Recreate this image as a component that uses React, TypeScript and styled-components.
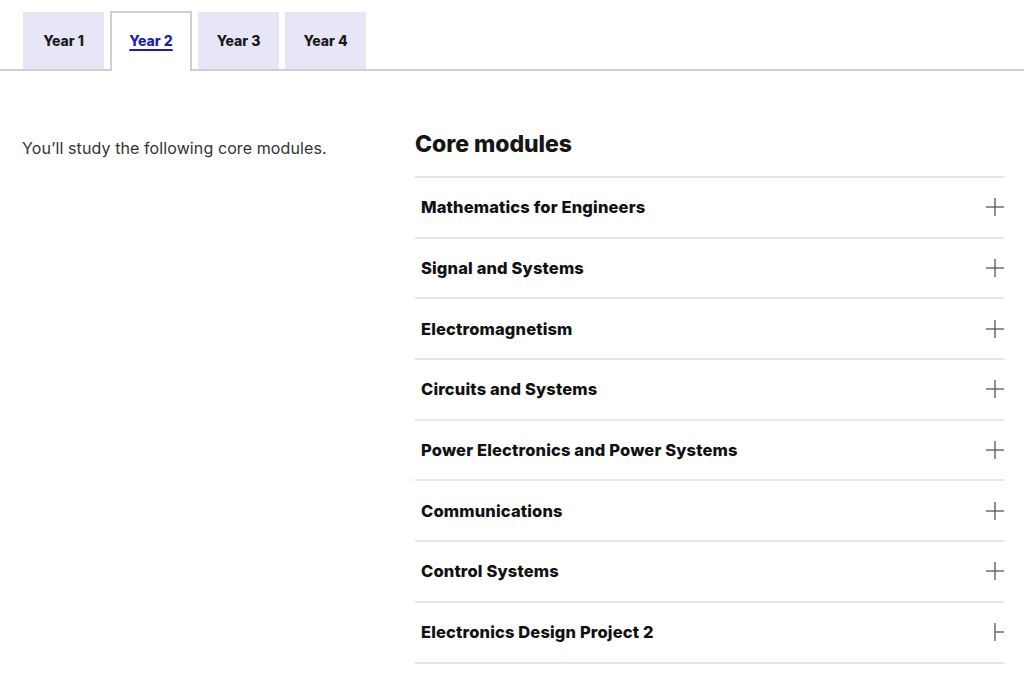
import styled, { createGlobalStyle } from 'styled-components'

const GlobalStyle = createGlobalStyle`
  body {
    margin: 0;
    background: #fff;
    font-family: Inter, "Liberation Sans", Arial, sans-serif;
    color: #111;
  }
`

const years = ['Year 1', 'Year 2', 'Year 3', 'Year 4']

const modules = [
  'Mathematics for Engineers',
  'Signal and Systems',
  'Electromagnetism',
  'Circuits and Systems',
  'Power Electronics and Power Systems',
  'Communications',
  'Control Systems',
  'Electronics Design Project 2',
]

// plus icon, the last one is caught half way through its animation
const PlusIcon = ({ half }: { half?: boolean }) => (
  <svg width="18" height="18" viewBox="0 0 18 18">
    <line x1="9" y1="0" x2="9" y2="18" stroke="#555" strokeWidth="1.3" />
    <line x1={half ? 9 : 0} y1="9" x2="18" y2="9" stroke="#555" strokeWidth="1.3" />
  </svg>
)

const App = () => {
  return (
    <>
      <GlobalStyle />
      <TabBar>
        {years.map((y, i) => (
          <Tab key={y} $active={i === 1}>
            {y}
          </Tab>
        ))}
      </TabBar>
      <Content>
        <Intro>You’ll study the following core modules.</Intro>
        <Modules>
          <Heading>Core modules</Heading>
          <List>
            {modules.map((m, i) => (
              <Row key={m}>
                <RowTitle>{m}</RowTitle>
                <PlusIcon half={i === modules.length - 1} />
              </Row>
            ))}
          </List>
        </Modules>
      </Content>
    </>
  )
}

export default App

const TabBar = styled.div`
  display: flex;
  align-items: flex-end;
  gap: 6px;
  padding: 11px 0 0 23px;
  border-bottom: 2px solid #cfcfcf;
  height: 58px;
`
// the active tab sits over the bar's bottom line
const Tab = styled.div<{ $active?: boolean }>`
  display: flex;
  align-items: center;
  justify-content: center;
  box-sizing: border-box;
  width: ${p => (p.$active ? '82px' : '81px')};
  height: ${p => (p.$active ? '60px' : '57px')};
  margin-bottom: ${p => (p.$active ? '-2px' : '0')};
  padding-bottom: ${p => (p.$active ? '3px' : '0')};
  font-size: 14px;
  font-weight: 800;
  background: ${p => (p.$active ? '#fff' : '#e6e6f7')};
  border: ${p => (p.$active ? '2px solid #cfcfcf' : 'none')};
  border-bottom: none;
  color: ${p => (p.$active ? '#1d1db0' : '#1a1a1a')};
  text-decoration: ${p => (p.$active ? 'underline' : 'none')};
  text-underline-offset: 3px;
  text-decoration-thickness: 1.5px;
`
const Content = styled.div`
  display: flex;
  padding: 59px 20px 0 22px;
`
const Intro = styled.p`
  width: 393px;
  margin: 8px 0 0;
  font-size: 16px;
  letter-spacing: 0.1px;
  color: #333;
`
const Modules = styled.div`
  flex: 1;
`
const Heading = styled.h2`
  margin: 0 0 18px;
  font-size: 23px;
  font-weight: 800;
  letter-spacing: -0.05px;
  line-height: 28px;
  color: #151515;
`
const List = styled.div`
  border-top: 2px solid #e4e6e8;
`
const Row = styled.div`
  display: flex;
  align-items: center;
  justify-content: space-between;
  height: 58.7px;
  padding: 0 0 0 6px;
  border-bottom: 2px solid #e4e6e8;
`
const RowTitle = styled.span`
  font-size: 16.5px;
  font-weight: 800;
  letter-spacing: 0.15px;
  color: #111;
`
